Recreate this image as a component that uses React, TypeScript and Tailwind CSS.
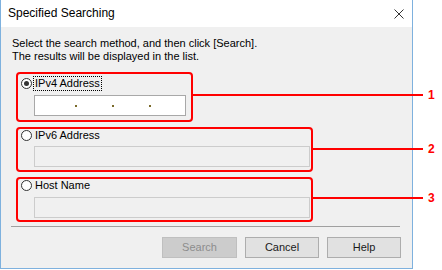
function Radio({ checked }: { checked?: boolean }) {
  return (
    <span className="flex h-[11px] w-[11px] shrink-0 items-center justify-center rounded-full border border-[#333333] bg-white">
      {checked && <span className="h-[5px] w-[5px] rounded-full bg-[#333333]" />}
    </span>
  );
}

function Callout({ top, width, label }: { top: number; width: number; label: string }) {
  return (
    <div className="absolute left-full flex h-[12px] items-center" style={{ top }}>
      <div className="h-[2px] bg-[#ff0000]" style={{ width }} />
      <span className="ml-[5px] text-[12px] font-bold leading-none text-[#ff0000]">{label}</span>
    </div>
  );
}

function Button({ label, disabled }: { label: string; disabled?: boolean }) {
  return (
    <button
      className={
        disabled
          ? 'h-[21px] w-[75px] border border-[#bfbfbf] bg-[#cccccc] text-[#8d8d8d]'
          : 'h-[21px] w-[74px] border border-[#adadad] bg-[#e1e1e1] text-[#1a1a1a]'
      }
    >
      {label}
    </button>
  );
}

export default function App() {
  return (
    <div className="relative h-[270px] w-[442px] overflow-hidden bg-white text-[11px] leading-[13px] text-black [font-family:'Liberation_Sans',Arial,sans-serif]">
      <div className="flex h-[269px] w-[413px] flex-col border border-t-0 border-[#7eb1de] bg-[#f0f0f0]">
        <div className="flex h-[27px] items-center justify-between bg-white pl-[7px] pr-[7px]">
          <span className="text-[12px]">Specified Searching</span>
          <svg width="10" height="10" viewBox="0 0 10 10" className="mr-[1px]">
            <path d="M0.5 0.5 L9.5 9.5 M9.5 0.5 L0.5 9.5" stroke="#333" strokeWidth="1" />
          </svg>
        </div>

        <div className="flex flex-1 flex-col">
          <div className="pl-[11px] pt-[10px]">
            <p>Select the search method, and then click [Search].</p>
            <p>The results will be displayed in the list.</p>
          </div>

          <div className="ml-[15px] mt-[9px] flex flex-col gap-[5px]">
            <div className="relative flex h-[50px] w-[177px] flex-col rounded-[4px] border-2 border-[#ff0000] pt-[2px]">
              <div className="flex h-[15px] items-center">
                <span className="ml-[3px]"><Radio checked /></span>
                <span className="ml-[1px] border border-dotted border-black px-[1px] leading-[13px]">IPv4 Address</span>
              </div>
              <div className="ml-[16px] mt-[4px] flex h-[21px] w-[152px] items-center gap-[35px] border border-[#a8a8a8] bg-white pl-[40px]">
                <span className="h-[2px] w-[2px] bg-[#7a6a2a]" />
                <span className="h-[2px] w-[2px] bg-[#7a6a2a]" />
                <span className="h-[2px] w-[2px] bg-[#7a6a2a]" />
              </div>
              <Callout top={15} width={232} label="1" />
            </div>

            <div className="relative flex h-[45px] w-[297px] flex-col rounded-[4px] border-2 border-[#ff0000]">
              <div className="flex h-[13px] items-center">
                <span className="ml-[3px]"><Radio /></span>
                <span className="ml-[3px]">IPv6 Address</span>
              </div>
              <div className="ml-[16px] mt-[4px] h-[21px] w-[276px] border border-[#cccccc] bg-[#f0f0f0]" />
              <Callout top={14} width={112} label="2" />
            </div>

            <div className="relative flex h-[45px] w-[297px] flex-col rounded-[4px] border-2 border-[#ff0000]">
              <div className="flex h-[13px] items-center">
                <span className="ml-[3px]"><Radio /></span>
                <span className="ml-[3px]">Host Name</span>
              </div>
              <div className="ml-[16px] mt-[5px] h-[21px] w-[276px] border border-[#cccccc] bg-[#f0f0f0]" />
              <Callout top={13} width={112} label="3" />
            </div>
          </div>

          <div className="ml-[10px] mt-[4px] h-[1px] w-[389px] bg-[#a0a0a0]" />

          <div className="mr-[11px] mt-[10px] flex justify-end gap-[8px]">
            <Button label="Search" disabled />
            <Button label="Cancel" />
            <Button label="Help" />
          </div>
        </div>
      </div>
    </div>
  );
}
